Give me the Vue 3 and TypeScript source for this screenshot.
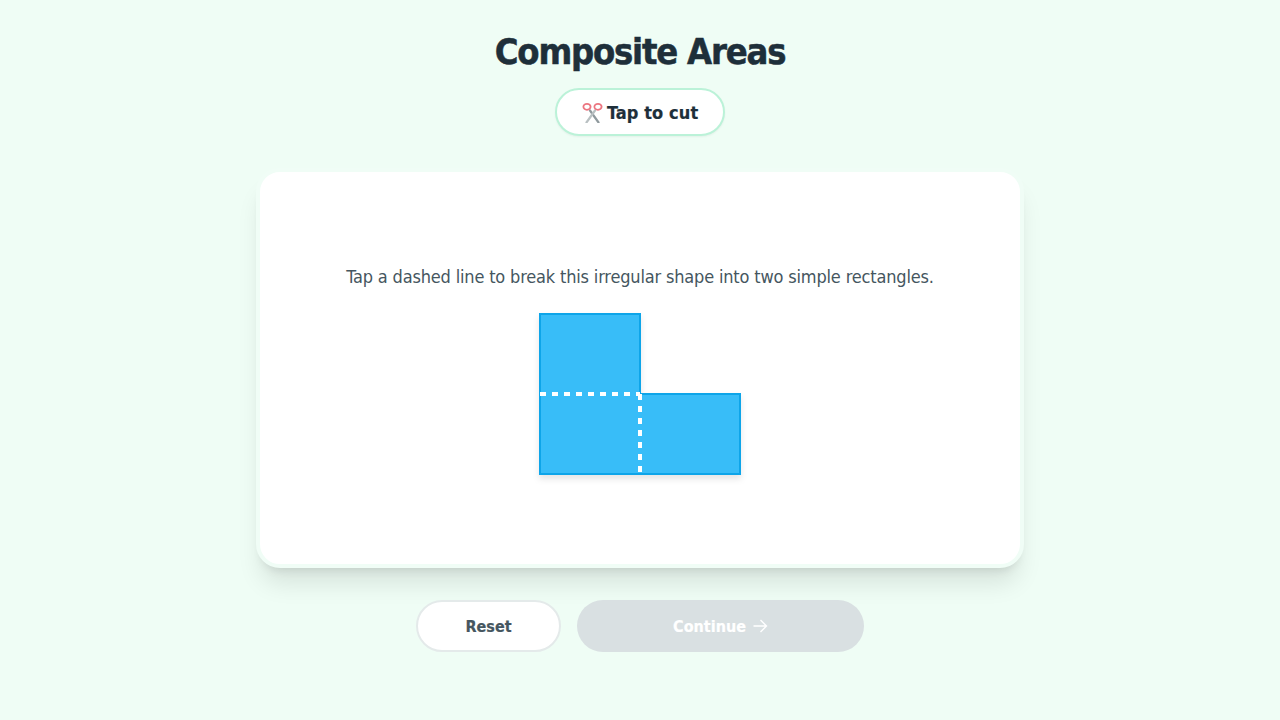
<script setup lang="ts">
const title: string = 'Composite Areas'
</script>

<template>
  <main class="page">
    <h1 class="title">{{ title }}</h1>
    <div class="pill">
      <svg class="scissors" width="21" height="21" viewBox="0 0 21 21" fill="none" aria-hidden="true">
        <path d="M8 8.5L16.5 20.5" stroke="#8f999d" stroke-width="2.2" stroke-linecap="round" />
        <path d="M13 8.5L4.5 20.5" stroke="#b9c0c2" stroke-width="2.2" stroke-linecap="round" />
        <ellipse cx="5" cy="4.8" rx="3.6" ry="3" stroke="#ec7580" stroke-width="1.8" />
        <ellipse cx="16" cy="4.8" rx="3.6" ry="3" stroke="#ec7580" stroke-width="1.8" />
      </svg>
      <span>Tap to cut</span>
    </div>
    <section class="card">
      <p class="prompt">Tap a dashed line to break this irregular shape into two simple rectangles.</p>
      <svg class="shape" width="220" height="180" viewBox="-10 -10 220 180">
        <path class="fill" d="M0 0H100V80H200V160H0Z" />
        <line class="cut" x1="0" y1="80" x2="100" y2="80" />
        <line class="cut" x1="100" y1="80" x2="100" y2="160" />
      </svg>
    </section>
    <div class="actions">
      <button class="btn reset">Reset</button>
      <button class="btn next">Continue
        <svg width="16" height="16" viewBox="0 0 16 16" fill="none" stroke="currentColor" stroke-width="1.4">
          <path d="M1.5 8H14.5M8.5 2L14.5 8L8.5 14" />
        </svg>
      </button>
    </div>
  </main>
</template>

<style>
body { margin: 0; background: #effdf5; }
</style>

<style scoped>
.page {
  width: 1280px;
  height: 720px;
  box-sizing: border-box;
  padding-top: 32px;
  display: flex;
  flex-direction: column;
  align-items: center;
  font-family: "DejaVu Sans Condensed", "DejaVu Sans", sans-serif;
  overflow: hidden;
}
.title {
  margin: 0;
  font-size: 36px;
  line-height: 40px;
  font-weight: 700;
  letter-spacing: -1.2px;
  -webkit-text-stroke: 0.5px #1e2f3a;
  color: #1e2f3a;
}
.pill {
  margin-top: 16px;
  height: 48px;
  width: 170px;
  box-sizing: border-box;
  padding-left: 25px;
  display: flex;
  align-items: center;
  gap: 4px;
  border: 2px solid #bbf2d8;
  border-radius: 24px;
  background: #fff;
  font-size: 18px;
  font-weight: 700;
  letter-spacing: 0.1px;
  -webkit-text-stroke: 0.2px #1e2f3a;
  color: #1e2f3a;
  box-shadow: 0 1px 2px rgba(0, 0, 0, 0.05);
}
.scissors {
  flex: none;
}
.card {
  margin-top: 32px;
  width: 768px;
  height: 400px;
  box-sizing: border-box;
  padding-top: 11px;
  border: 4px solid #f0fdf6;
  border-radius: 24px;
  background: #fff;
  box-shadow: 0 20px 25px -5px rgba(0, 0, 0, 0.1), 0 8px 10px -6px rgba(0, 0, 0, 0.1);
  display: flex;
  flex-direction: column;
  align-items: center;
  justify-content: center;
}
.prompt {
  margin: 0 0 13px;
  font-size: 18px;
  line-height: 28px;
  letter-spacing: -0.17px;
  color: #455660;
}
.shape {
  display: block;
  filter: drop-shadow(0 4px 3px rgba(0, 0, 0, 0.1));
}
.fill {
  fill: #38bdf8;
  stroke: #0ea5e9;
  stroke-width: 2;
}
.cut {
  stroke: #fff;
  stroke-width: 4;
  stroke-dasharray: 6 6;
}
.actions {
  margin-top: 32px;
  display: flex;
  gap: 16px;
}
.btn {
  height: 52px;
  box-sizing: border-box;
  border-radius: 26px;
  font: inherit;
  font-size: 16px;
  font-weight: 700;
  -webkit-text-stroke: 0.2px currentColor;
  display: flex;
  align-items: center;
  justify-content: center;
  gap: 6px;
}
.reset {
  width: 145px;
  background: #fff;
  border: 2px solid #e4eaea;
  color: #455660;
}
.next {
  width: 287px;
  background: #d9e0e2;
  border: 0;
  color: #fff;
}
</style>
